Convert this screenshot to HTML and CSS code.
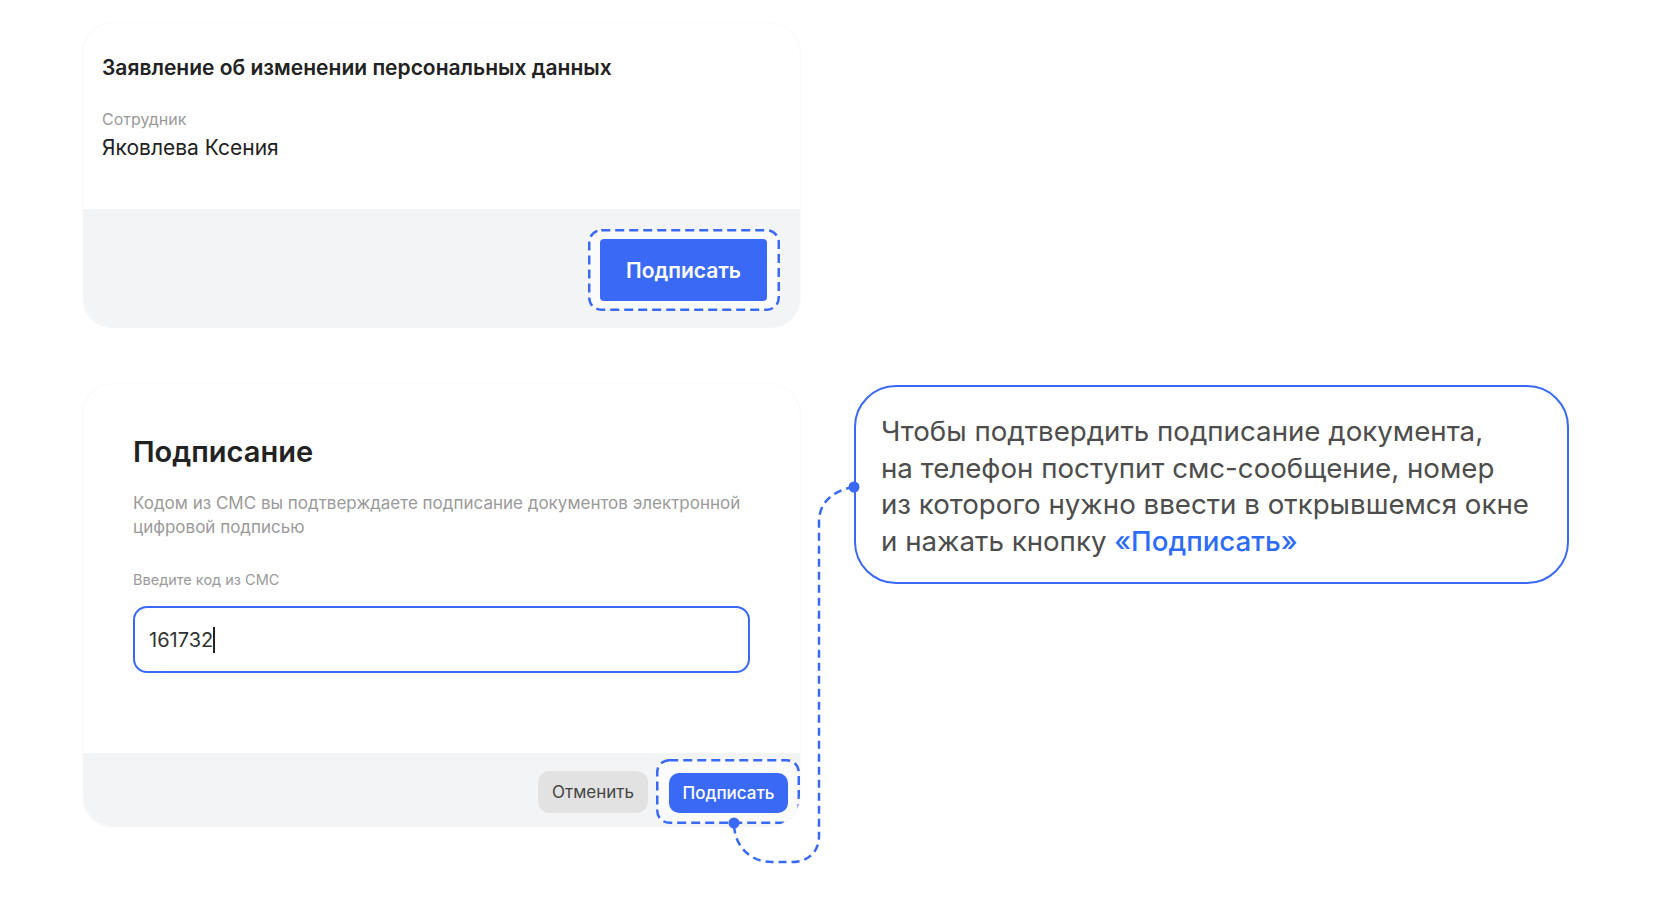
FILE: index.html
```html
<!DOCTYPE html>
<html lang="ru">
<head>
    <meta charset="UTF-8">
    <meta name="viewport" content="width=device-width, initial-scale=1.0">
    <title>Подписание документа</title>
    <link rel="stylesheet" href="styles.css">
</head>
<body>
    <main class="page">
        <section class="card card-document">
            <div class="card-body">
                <h2 class="doc-title">Заявление об изменении персональных данных</h2>
                <div class="field-label">Сотрудник</div>
                <div class="field-value">Яковлева Ксения</div>
            </div>
            <div class="card-footer">
                <span class="highlight">
                    <svg class="dash-frame"><rect/></svg>
                    <button type="button" class="btn btn-large">Подписать</button>
                </span>
            </div>
        </section>

        <section class="card card-sign">
            <div class="card-body">
                <h1 class="sign-title">Подписание</h1>
                <p class="sign-text">Кодом из СМС вы подтверждаете подписание документов электронной цифровой подписью</p>
                <label class="input-label" for="code">Введите код из СМС</label>
                <div class="code-input" id="code">161732<span class="caret"></span></div>
            </div>
            <div class="card-footer">
                <button type="button" class="btn btn-secondary">Отменить</button>
                <span class="highlight highlight-small">
                    <svg class="dash-frame"><rect/></svg>
                    <button type="button" class="btn btn-small">Подписать</button>
                </span>
            </div>
        </section>

        <aside class="callout">
            Чтобы подтвердить подписание документа,<br>
            на телефон поступит смс-сообщение, номер<br>
            из которого нужно ввести в открывшемся окне<br>
            и нажать кнопку <span class="accent">«Подписать»</span>
        </aside>

        <!-- connector between the callout and the sign button -->
        <svg class="connector" width="1653" height="898" viewBox="0 0 1653 898">
            <path d="M854 487 C836 490 819 500 819 522 L819 836 C819 852 808 862 792 862 L772 862 C750 862 734 846 734 823"
                  fill="none" stroke="#3a6af5" stroke-width="2.5" stroke-dasharray="8 5"/>
            <circle cx="854" cy="487" r="5.5" fill="#3a6af5"/>
            <circle cx="734" cy="823" r="5.5" fill="#3a6af5"/>
        </svg>
    </main>
</body>
</html>
```

FILE: styles.css
```css
:root {
    --blue: #3a6af5;
    --text: #222;
    --muted: #9a9a9a;
    --footer: #f3f4f6;
}

body {
    margin: 0;
    background: #fff;
    font-family: Inter, "Noto Sans", sans-serif;
    color: var(--text);
}

.page {
    position: relative;
    display: grid;
    grid-template-columns: 717px 715px;
    column-gap: 54px;
    row-gap: 57px;
    padding: 23px 0 0 83px;
    min-height: 875px;
    align-items: start;
    align-content: start;
}

.card {
    grid-column: 1;
    background: #fff;
    border-radius: 30px;
    overflow: hidden;
    box-shadow: 0 0 2px rgba(0, 0, 0, 0.06), 0 1px 2px rgba(0, 0, 0, 0.04);
}

.card-footer {
    background: var(--footer);
    display: flex;
    justify-content: flex-end;
    align-items: center;
}

/* top card */
.card-document .card-body {
    padding: 32px 19px 48px;
}

.doc-title {
    margin: 0 0 28px;
    font-size: 21px;
    line-height: 26px;
    font-weight: 600;
}

.field-label {
    font-size: 16px;
    line-height: 20px;
    color: var(--muted);
    margin-bottom: 6px;
}

.field-value {
    font-size: 21px;
    line-height: 26px;
}

.card-document .card-footer {
    padding: 20px 20px 16px;
}

/* dashed frame round the highlighted button */
.highlight {
    position: relative;
    display: flex;
    padding: 10px 13px 10px 12px;
}

.dash-frame {
    position: absolute;
    top: 0;
    left: 0;
    width: 100%;
    height: 100%;
    overflow: visible;
}

.dash-frame rect {
    x: 1.25px;
    y: 1.25px;
    width: calc(100% - 2.5px);
    height: calc(100% - 2.5px);
    rx: 12px;
    fill: #fbfbfc;
    stroke: var(--blue);
    stroke-width: 2.5px;
    stroke-dasharray: 9 5;
}

.btn {
    position: relative;
    border: none;
    font-family: inherit;
    cursor: pointer;
}

.btn-large {
    width: 167px;
    height: 62px;
    border-radius: 4px;
    background: var(--blue);
    color: #fff;
    font-size: 21px;
    font-weight: 600;
}

/* sign card */
.card-sign {
    grid-row: 2;
}

.card-sign .card-body {
    padding: 50px 50px 80px;
}

.sign-title {
    margin: 0 0 22px;
    font-size: 29px;
    line-height: 35px;
    font-weight: 600;
}

.sign-text {
    margin: 0 0 32px;
    font-size: 17px;
    line-height: 24px;
    color: var(--muted);
}

.input-label {
    display: block;
    font-size: 14.5px;
    line-height: 18px;
    color: var(--muted);
    margin-bottom: 17px;
}

.code-input {
    height: 63px;
    border: 2px solid var(--blue);
    border-radius: 14px;
    padding: 0 14px;
    display: flex;
    align-items: center;
    font-size: 20px;
    color: #333;
}

.caret {
    width: 1.5px;
    height: 26px;
    background: #222;
}

.card-sign .card-footer {
    padding: 6px 0 2px;
    gap: 8px;
}

.btn-secondary {
    width: 110px;
    height: 42px;
    border-radius: 12px;
    background: #e2e2e2;
    color: #444;
    font-size: 17px;
}

.highlight-small {
    padding: 14px 12px 11px 13px;
}

.btn-small {
    width: 119px;
    height: 40px;
    border-radius: 10px;
    background: var(--blue);
    color: #fff;
    font-size: 17px;
    font-weight: 500;
}

/* callout */
.callout {
    grid-column: 2;
    grid-row: 2;
    margin-top: 1px;
    height: 199px;
    box-sizing: border-box;
    border: 2.5px solid var(--blue);
    border-radius: 42px;
    padding: 26px 20px 0 25px;
    font-size: 27.7px;
    line-height: 36.5px;
    color: #4d4d4d;
}

.accent {
    color: #2d6cf6;
    font-weight: 500;
}

.connector {
    position: absolute;
    top: 0;
    left: 0;
    pointer-events: none;
}
```
